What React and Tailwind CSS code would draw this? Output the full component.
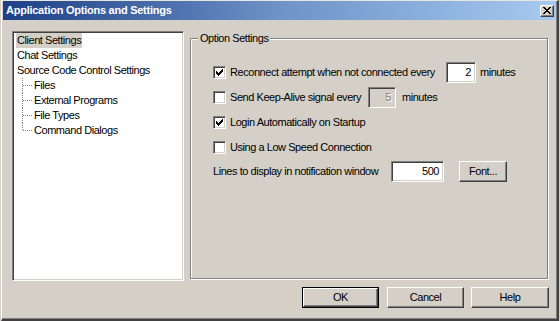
const font = { fontFamily: '"Liberation Sans", Arial, sans-serif' }

function Check() {
    // classic 7x7 tick
    const px = [
        [6, 0], [5, 1], [6, 1], [0, 2], [4, 2], [5, 2], [6, 2],
        [0, 3], [1, 3], [3, 3], [4, 3], [5, 3], [0, 4], [1, 4], [2, 4], [3, 4], [4, 4],
        [1, 5], [2, 5], [3, 5], [2, 6],
    ]
    return (
        <svg width="7" height="7" viewBox="0 0 7 7" shapeRendering="crispEdges">
            {px.map(([x, y]) => (
                <rect key={x + '-' + y} x={x} y={y} width="1" height="1" fill="#000" />
            ))}
        </svg>
    )
}

function Checkbox({ checked }) {
    return (
        <span className="flex items-center justify-center w-[13px] h-[13px] shrink-0 bg-white border border-t-[#808080] border-l-[#808080] border-b-white border-r-white shadow-[inset_1px_1px_0_#404040,inset_-1px_-1px_0_#d4d0c8]">
            {checked && <Check />}
        </span>
    )
}

function Field({ value, w, disabled }) {
    return (
        <div
            className={`flex items-center justify-end shrink-0 h-[21px] pr-[4px] border border-t-[#808080] border-l-[#808080] border-b-white border-r-white shadow-[inset_1px_1px_0_#404040,inset_-1px_-1px_0_#d4d0c8] ${w} ${disabled ? 'bg-[#d4d0c8] text-[#808080] [text-shadow:1px_1px_0_#fff]' : 'bg-white text-black'}`}
        >
            {value}
        </div>
    )
}

function Button({ children, w, isDefault }) {
    const inner = (
        <div className={`flex items-center justify-center h-full border border-t-white border-l-white border-b-[#404040] border-r-[#404040] shadow-[inset_-1px_-1px_0_#808080] text-black ${isDefault ? 'w-full' : w}`}>
            {children}
        </div>
    )
    if (isDefault) {
        return <div className={`h-[21px] border border-black ${w}`}>{inner}</div>
    }
    return <div className="h-[21px]">{inner}</div>
}

function TreeLink({ last }) {
    return (
        <svg width="12" height="15" viewBox="0 0 12 15" className="shrink-0" shapeRendering="crispEdges">
            <line x1="0.5" y1="0" x2="0.5" y2={last ? 8 : 15} stroke="#808080" strokeDasharray="1 1" />
            <line x1="1" y1="7.5" x2="10" y2="7.5" stroke="#808080" strokeDasharray="1 1" />
        </svg>
    )
}

export default function App() {
    const children = ['Files', 'External Programs', 'File Types', 'Command Dialogs']

    return (
        <div className="w-[560px] h-[321px] bg-[#d4d0c8] text-[11px] leading-none tracking-[-0.45px]" style={font}>
            <div className="flex flex-col w-[558px] h-[321px] ml-[1px] border-l border-t border-l-white border-t-[#e8e6e0] border-r-2 border-b-2 border-r-[#404040] border-b-[#404040] shadow-[inset_-1px_-1px_0_#808080]">
                {/* Title bar */}
                <div className="flex items-center justify-between h-[19px] ml-[1px] mr-[1px] pl-[3px] pr-[1px] bg-gradient-to-r from-[#1e3f86] via-[#6f92c8] to-[#a6caf0]">
                    <span className="text-white font-bold text-[11px] tracking-[-0.25px]">Application Options and Settings</span>
                    <div className="flex items-center justify-center w-[14px] h-[12px] mr-[1px] bg-[#d4d0c8] border border-t-white border-l-white border-b-[#404040] border-r-[#404040] shadow-[inset_-1px_-1px_0_#808080]">
                        <svg width="8" height="7" viewBox="0 0 8 7" shapeRendering="crispEdges">
                            <path d="M0 0h2v1h-2zM6 0h2v1h-2zM1 1h2v1h-2zM5 1h2v1h-2zM2 2h4v1h-4zM3 3h2v1h-2zM2 4h4v1h-4zM1 5h2v1h-2zM5 5h2v1h-2zM0 6h2v1h-2zM6 6h2v1h-2z" fill="#000" />
                        </svg>
                    </div>
                </div>

                {/* Body */}
                <div className="flex gap-[6px] pl-[10px] mt-[11px]">
                    {/* Tree */}
                    <div className="w-[172px] h-[250px] bg-white pt-[1px] pl-[2px] border border-t-[#808080] border-l-[#808080] border-b-white border-r-white shadow-[inset_1px_1px_0_#404040,inset_-1px_-1px_0_#d4d0c8]">
                        <div className="flex items-center h-[15px] pl-[1px]">
                            <span className="px-[1px] py-[2px] bg-[#d4d0c8]">Client Settings</span>
                        </div>
                        <div className="flex items-center h-[15px] pl-[2px]">Chat Settings</div>
                        <div className="flex items-center h-[15px] pl-[2px]">Source Code Control Settings</div>
                        {children.map((c, i) => (
                            <div key={c} className="flex items-center h-[15px] pl-[7px]">
                                <TreeLink last={i === children.length - 1} />
                                <span>{c}</span>
                            </div>
                        ))}
                    </div>

                    {/* Option settings group */}
                    <div className="relative w-[358px] h-[241px] mt-[7px] pt-[23px] pl-[22px] border border-[#808080] shadow-[inset_1px_1px_0_#fff,1px_1px_0_#fff]">
                        <span className="absolute -top-[6px] left-[7px] px-[2px] bg-[#d4d0c8]">Option Settings</span>

                        <div className="flex items-center h-[21px]">
                            <Checkbox checked />
                            <span className="w-[220px] pl-[4px] whitespace-nowrap">Reconnect attempt when not connected every</span>
                            <Field value="2" w="w-[30px]" />
                            <span className="ml-[4px]">minutes</span>
                        </div>
                        <div className="flex items-center h-[21px] mt-[4px]">
                            <Checkbox />
                            <span className="w-[142px] pl-[4px] whitespace-nowrap">Send Keep-Alive signal every</span>
                            <Field value="5" w="w-[28px]" disabled />
                            <span className="ml-[6px]">minutes</span>
                        </div>
                        <div className="flex items-center gap-[4px] h-[21px] mt-[4px]">
                            <Checkbox checked />
                            <span>Login Automatically on Startup</span>
                        </div>
                        <div className="flex items-center gap-[4px] h-[21px] mt-[4px]">
                            <Checkbox />
                            <span>Using a Low Speed Connection</span>
                        </div>
                        <div className="flex items-center h-[21px] mt-[3px]">
                            <span className="w-[178px] whitespace-nowrap">Lines to display in notification window</span>
                            <Field value="500" w="w-[53px]" />
                            <div className="ml-[15px]">
                                <Button w="w-[48px]">Font...</Button>
                            </div>
                        </div>
                    </div>
                </div>

                {/* Dialog buttons */}
                <div className="flex justify-end gap-[7px] mt-[6px] pr-[8px]">
                    <Button w="w-[77px]" isDefault>OK</Button>
                    <div className="ml-[1px]">
                        <Button w="w-[77px]">Cancel</Button>
                    </div>
                    <Button w="w-[78px]">Help</Button>
                </div>
            </div>
        </div>
    )
}
